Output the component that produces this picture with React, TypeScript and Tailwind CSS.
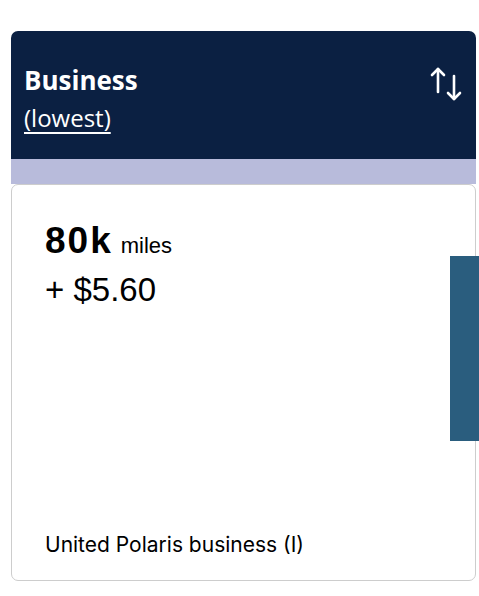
import { useState } from "react"

function SortIcon() {
  return (
    <svg width="34" height="36" viewBox="0 0 34 36" fill="none" stroke="white" strokeWidth="2.6" strokeLinecap="round" strokeLinejoin="round">
      {/* up arrow */}
      <path d="M8 3v23" />
      <path d="M2 9l6-6 6 6" />
      {/* down arrow */}
      <path d="M24 10v23" />
      <path d="M18 27l6 6 6-6" />
    </svg>
  )
}

export default function App() {
  const [selected] = useState(true)

  return (
    <div className="relative h-[596px] w-[479px] overflow-hidden bg-white pl-[11px] pt-[31px]" style={{ fontFamily: "Inter, 'Noto Sans', sans-serif" }}>
      <div className="w-[465px]">
        {/* Header */}
        <div className="flex h-[128px] items-start justify-between rounded-t-[7px] bg-[#0b2042] pl-[13px] pr-[12px] pt-[33px]">
          <div className="flex flex-col" style={{ fontFamily: "'Open Sans', sans-serif" }}>
            <span className="text-[26px] font-bold leading-[32px] text-white">Business</span>
            <a
              href="#"
              className="mt-[7px] text-[24px] leading-[30px] text-white underline decoration-[2px] underline-offset-[5px]"
            >
              (lowest)
            </a>
          </div>
          <div className="pt-[2px]">
            <SortIcon />
          </div>
        </div>

        {/* Lavender band */}
        <div className="h-[25px] bg-[#b8bbdb]" />

        {/* Fare card */}
        <div className={`flex h-[397px] flex-col justify-between rounded-[7px] border border-[#cdcdcd] bg-white pb-[21px] pl-[33px] pt-[34px] ${selected ? "" : ""}`}>
          <div style={{ fontFamily: "'Liberation Sans', Arial, sans-serif" }}>
            <div className="flex items-baseline gap-[8px] text-black">
              <span className="text-[37px] font-bold leading-[44px] tracking-[2px]">80k</span>
              <span className="text-[22px] leading-[26px]">miles</span>
            </div>
            <div className="mt-[7px] text-[33px] leading-[40px] text-black">+ $5.60</div>
          </div>
          <div className="text-[21px] leading-[28px] text-black">United Polaris business (I)</div>
        </div>
      </div>

      {/* Side panel peeking in */}
      <div className="absolute left-[450px] top-[256px] h-[185px] w-[40px] bg-[#2a5d7e]" />
    </div>
  )
}
